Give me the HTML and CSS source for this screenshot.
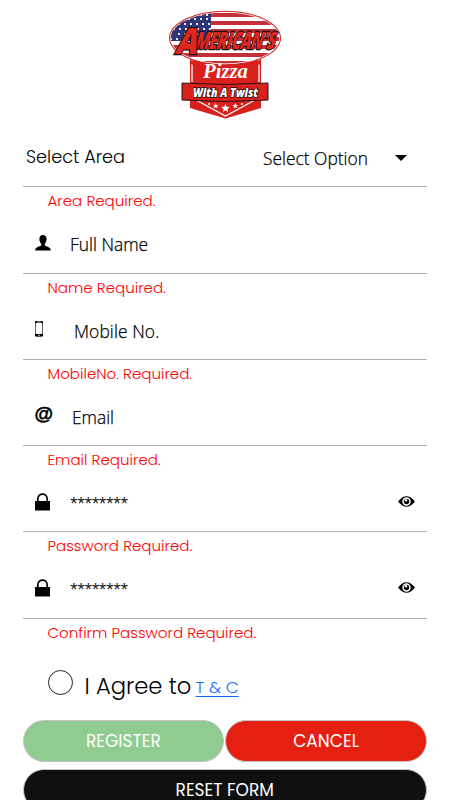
FILE: index.html
```html
<!DOCTYPE html>
<html lang="en">
<head>
<meta charset="utf-8">
<meta name="viewport" content="width=device-width, initial-scale=1">
<title>Register</title>
<link rel="stylesheet" href="styles.css">
</head>
<body>
<main class="page">
  <header class="brand">
    <svg class="logo" viewBox="0 0 114 110" role="img" aria-label="American's Pizza With A Twist">
      <defs><clipPath id="oval"><ellipse cx="57" cy="28" rx="54.300" ry="25.500"/></clipPath></defs>
      <path d="M22 48H93V98L57.500 108.500 22 98Z" fill="#d9201c"/>
      <path d="M24 49V72M91 49V72M28 90L57.500 106 87 90" fill="none" stroke="#fff" stroke-width="1.300"/>
      <ellipse cx="57" cy="28" rx="56" ry="27.300" fill="#d9201c"/>
      <ellipse cx="57" cy="28" rx="55" ry="26.300" fill="#fff"/>
      <g clip-path="url(#oval)">
        <path d="M0 5H114M0 13H114M0 21H114M0 29H114M0 37H114M0 45H114M0 53H114" stroke="#c4303a" stroke-width="4"/>
        <path d="M0 0H43V31H0Z" fill="#303578"/>
        <path d="M10 14H43M5 19H43M10 24H43M20 9H43M20 5H43M2 29H20" stroke="#e8e8f4" stroke-width="2" stroke-dasharray="2 4"/>
      </g>
      <path d="M22 50Q57 61 93 50V54Q57 64 22 54Z" fill="#d9201c"/>
      <g transform="translate(7 42) skewX(-16)">
        <text class="name" transform="scale(.74 1)" x="25" y="-3" textLength="107" lengthAdjust="spacingAndGlyphs" font-size="24">MERICAN'S</text>
        <text class="name" transform="scale(.8 1)" x="0" y="2" textLength="27" lengthAdjust="spacingAndGlyphs" font-size="36">A</text>
      </g>
      <text class="pizza" x="35" y="68" textLength="45" lengthAdjust="spacingAndGlyphs">Pizza</text>
      <path d="M14 73Q57 76 100 73V90Q57 93 14 90Z" fill="#d9201c" stroke="#241313" stroke-width="1"/>
      <text class="twist" x="25" y="86.500" textLength="65" lengthAdjust="spacingAndGlyphs">With A Twist</text>
      <g fill="#fff">
        <path id="star" d="M57.500 94L58.700 96.800 61.800 97 59.400 98.900 60.200 102 57.500 100.300 54.800 102 55.600 98.900 53.200 97 56.300 96.800Z"/>
        <use href="#star" transform="translate(9.800 31) scale(.66)"/>
        <use href="#star" transform="translate(29.300 31) scale(.66)"/>
        <circle cx="41" cy="94" r="1"/><circle cx="74" cy="94" r="1"/>
      </g>
    </svg>
  </header>

  <form class="form">
    <div class="field">
      <div class="row">
        <label class="area">Select Area</label>
        <span class="value option">Select Option</span>
        <svg class="caret" viewBox="0 0 12 6"><path d="M0 0H12L6 6Z"/></svg>
      </div>
      <p class="error">Area Required.</p>
    </div>
    <div class="field">
      <div class="row">
        <span class="icon"><svg class="i-user" width="16" height="16" viewBox="0 0 16 16"><path d="M8 0C5.600 0 4.200 1.700 4.400 4.300 4.500 6.300 5.300 8 6.300 9V10.500C4.800 11.500.5 11.800.3 14.800V15.500H15.700V14.800C15.500 11.800 11.200 11.500 9.700 10.500V9C10.700 8 11.500 6.300 11.600 4.300 11.800 1.700 10.400 0 8 0Z"/></svg></span>
        <span class="value v-name">Full Name</span>
      </div>
      <p class="error">Name Required.</p>
    </div>
    <div class="field">
      <div class="row">
        <span class="icon"><svg class="i-phone" width="8" height="16" viewBox="0 0 8 16"><rect x=".5" y=".5" width="7" height="14.500" rx="1" fill="#fff" stroke="#333" stroke-width=".8"/><path d="M0 13H8V14.500Q8 15.500 7 15.500H1Q0 15.500 0 14.500ZM0 1Q0 0 1 0H7Q8 0 8 1V2H0Z"/><path d="M2 1H6M3 14.200H5" stroke="#fff" stroke-width=".8"/></svg></span>
        <span class="value v-mobile">Mobile No.</span>
      </div>
      <p class="error">MobileNo. Required.</p>
    </div>
    <div class="field">
      <div class="row">
        <span class="icon at">@</span>
        <span class="value v-email">Email</span>
      </div>
      <p class="error">Email Required.</p>
    </div>
    <div class="field">
      <div class="row">
        <span class="icon"><svg class="i-lock" width="15" height="18" viewBox="0 0 15 18"><path d="M0 8H15V17.500H0Z"/><path d="M2.800 9V6C2.800 -.6 12.200 -.6 12.200 6V9" fill="none" stroke="#000" stroke-width="1.700"/></svg></span>
        <span class="value stars">********</span>
        <svg class="eye" viewBox="0 0 17 11"><path d="M0 5.500Q8.500 -5 17 5.500 8.500 16 0 5.500Z"/><circle cx="8.500" cy="5.500" r="3.500" fill="none" stroke="#fff" stroke-width="1.500"/><circle cx="8" cy="4.200" r="1.200" fill="#fff"/></svg>
      </div>
      <p class="error">Password Required.</p>
    </div>
    <div class="field">
      <div class="row">
        <span class="icon"><svg class="i-lock" width="15" height="18" viewBox="0 0 15 18"><path d="M0 8H15V17.500H0Z"/><path d="M2.800 9V6C2.800 -.6 12.200 -.6 12.200 6V9" fill="none" stroke="#000" stroke-width="1.700"/></svg></span>
        <span class="value stars">********</span>
        <svg class="eye" viewBox="0 0 17 11"><path d="M0 5.500Q8.500 -5 17 5.500 8.500 16 0 5.500Z"/><circle cx="8.500" cy="5.500" r="3.500" fill="none" stroke="#fff" stroke-width="1.500"/><circle cx="8" cy="4.200" r="1.200" fill="#fff"/></svg>
      </div>
      <p class="error">Confirm Password Required.</p>
    </div>

    <div class="terms">
      <span class="radio"></span>
      <span class="agree">I Agree to</span>
      <a class="link" href="#">T &amp; C</a>
    </div>
    <div class="actions">
      <button type="button" class="btn register">REGISTER</button>
      <button type="button" class="btn cancel">CANCEL</button>
      <button type="button" class="btn reset">RESET FORM</button>
    </div>
  </form>
</main>
</body>
</html>
```
FILE: styles.css
```css
* { box-sizing: border-box; }

body {
  margin: 0;
  background: #fff;
  color: #000;
  font-family: Poppins, Inter, sans-serif;
  font-weight: 300;
  font-feature-settings: "cv11";
}

.page {
  height: 800px;
  overflow: hidden;
  padding: 0 23px 0 22.500px;
}

.brand {
  height: 129px;
  padding-top: 10px;
  text-align: center;
}

.logo { width: 114px; height: 110px; overflow: visible; }

.name {
  font-family: "Open Sans", sans-serif;
  font-weight: 800;
  fill: #e0261f;
  stroke: #1b1010;
  stroke-width: 2.4px;
  paint-order: stroke;
}

.pizza {
  font-family: "Liberation Serif", serif;
  font-style: italic;
  font-weight: 700;
  font-size: 20px;
  fill: #fff;
}

.twist {
  font-family: "Open Sans", sans-serif;
  font-style: italic;
  font-weight: 800;
  font-size: 12px;
  fill: #fff;
  stroke: #1b1010;
  stroke-width: 1.5px;
  paint-order: stroke;
}

.field { height: 86.25px; }

.row {
  display: flex;
  align-items: center;
  height: 58.25px;
  border-bottom: 1.5px solid #b0b0b4;
}

.area {
  width: 240.5px;
  padding: 0 0 2px 3.500px;
  font-size: 17.7px;
}

.value {
  font-family: "Open Sans", sans-serif;
  font-weight: 300;
  font-size: 17.4px;
  -webkit-text-stroke: .25px #000;
  white-space: nowrap;
}

.option { width: 132px; }

.caret { width: 12px; height: 6px; }

.icon {
  display: flex;
  width: 47.5px;
  padding-left: 12px;
}

.i-user { margin-top: -2px; }
.i-phone { margin-top: -2px; }
.i-lock { margin-top: -2px; }

.v-name, .v-mobile, .v-email { padding-top: 1px; }
.v-mobile { padding-left: 4px; letter-spacing: .1px; }
.v-email { padding-left: 2px; }

.at {
  font: 700 19px/20px "Liberation Sans", sans-serif;
  -webkit-text-stroke: .5px #000;
  padding-bottom: 4px;
}

.stars {
  flex: 1;
  padding-bottom: 1px;
  font-size: 14px;
  letter-spacing: -.5px;
}

.eye {
  width: 17px;
  height: 11px;
  margin: -2px 12.5px 0 0;
}

.error {
  margin: 0;
  padding-left: 25px;
  color: #f00;
  font-size: 15.05px;
  line-height: 28px;
  white-space: nowrap;
}

.terms {
  display: flex;
  height: 73.500px;
  padding: 23.500px 0 0 25px;
}

.radio {
  width: 25px;
  height: 25px;
  border: 1px solid #222;
  border-radius: 50%;
}

.agree {
  margin-left: 12px;
  width: 111px;
  font-size: 22.7px;
  line-height: 32px;
  white-space: nowrap;
}

.link {
  color: #1769ff;
  font-size: 16.9px;
  line-height: 35px;
  text-underline-offset: 3px;
  white-space: nowrap;
}

.actions {
  display: grid;
  grid-template-columns: 1fr 1fr;
  column-gap: 1px;
  row-gap: 7px;
}

.btn {
  height: 42px;
  padding: 0;
  border: 1.5px solid #c4c4c4;
  border-radius: 21px;
  color: #fff;
  font: 400 17px/38px Poppins, Inter, sans-serif;
}

.register { background: #90cc90; }
.cancel { background: #e52012; }

.reset {
  grid-column: 1 / -1;
  background: #101010;
}
```
